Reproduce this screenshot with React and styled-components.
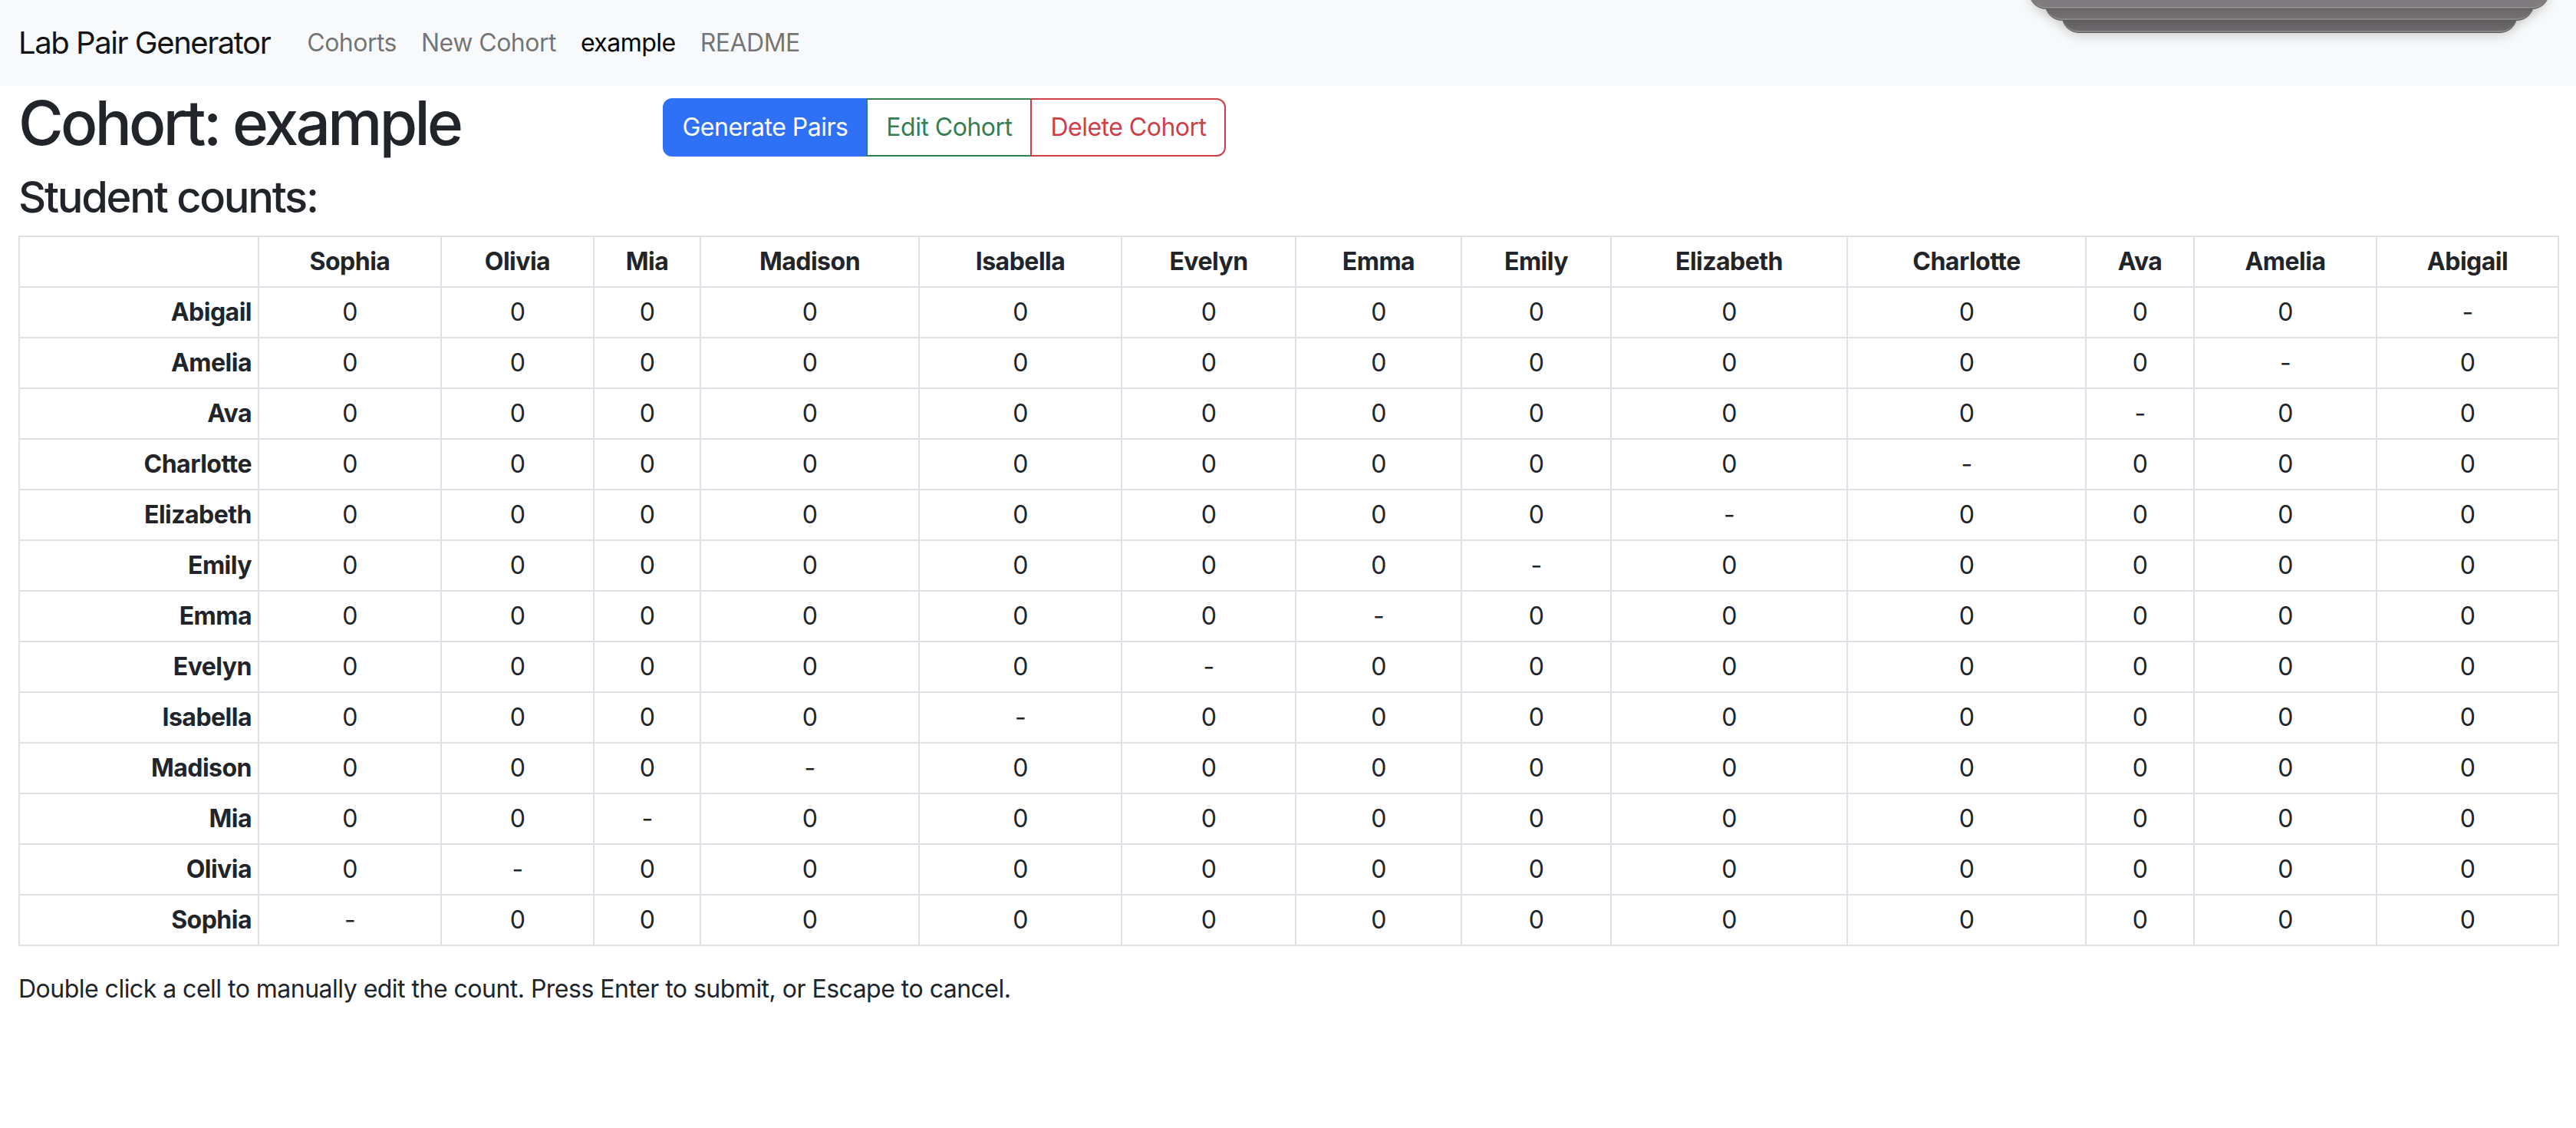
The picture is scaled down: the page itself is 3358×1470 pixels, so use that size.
import React from 'react';
import styled, { createGlobalStyle } from 'styled-components';

const students = [
  'Abigail',
  'Amelia',
  'Ava',
  'Charlotte',
  'Elizabeth',
  'Emily',
  'Emma',
  'Evelyn',
  'Isabella',
  'Madison',
  'Mia',
  'Olivia',
  'Sophia',
];

const columns = [...students].reverse();

// widths of the table columns, first one is the row-name column
const colWidths = [312, 238, 199, 139, 285, 264, 227, 216, 195, 308, 311, 141, 238, 237];

const navLinks = [
  { label: 'Cohorts' },
  { label: 'New Cohort' },
  { label: 'example', active: true },
  { label: 'README' },
];

export default function App() {
  return (
    <>
      <GlobalStyle />
      <Navbar>
        <Brand href="#">Lab Pair Generator</Brand>
        <NavList>
          {navLinks.map((link) => (
            <NavLink key={link.label} href="#" $active={link.active}>
              {link.label}
            </NavLink>
          ))}
        </NavList>
        <Island>
          <IslandLayer $left={43} $right={42} $bottom={42} $color="#6e6b6e" />
          <IslandLayer $left={21} $right={20} $bottom={26} $color="#777376" />
          <IslandLayer $left={0} $right={0} $bottom={11} $color="#7f7b7e" />
        </Island>
      </Navbar>

      <Main>
        <HeaderRow>
          <Title>Cohort: example</Title>
          <Actions>
            <ButtonGroup>
              <Button $variant="primary">Generate Pairs</Button>
              <Button $variant="success">Edit Cohort</Button>
              <Button $variant="danger">Delete Cohort</Button>
            </ButtonGroup>
          </Actions>
        </HeaderRow>

        <SubTitle>Student counts:</SubTitle>

        <Table>
          <colgroup>
            {colWidths.map((w, i) => (
              <col key={i} style={{ width: w }} />
            ))}
          </colgroup>
          <thead>
            <tr>
              <HeadCell />
              {columns.map((name) => (
                <HeadCell key={name}>{name}</HeadCell>
              ))}
            </tr>
          </thead>
          <tbody>
            {students.map((row) => (
              <tr key={row}>
                <RowHead>{row}</RowHead>
                {columns.map((col) => (
                  <Cell key={col}>{row === col ? '-' : 0}</Cell>
                ))}
              </tr>
            ))}
          </tbody>
        </Table>

        <Hint>
          Double click a cell to manually edit the count. Press Enter to submit, or Escape to cancel.
        </Hint>
      </Main>
    </>
  );
}

const GlobalStyle = createGlobalStyle`
  * {
    box-sizing: border-box;
  }
  body {
    margin: 0;
    background: #fff;
    color: #212529;
    font-family: Inter, Roboto, 'Noto Sans', sans-serif;
    font-size: 32px;
    line-height: 1.5;
    letter-spacing: -0.016em;
  }
`;

const Navbar = styled.nav`
  position: relative;
  display: flex;
  align-items: center;
  height: 112px;
  padding: 16px 24px;
  background: #f8f9fa;
`;

const Brand = styled.a`
  padding: 10px 0;
  margin-right: 32px;
  font-size: 40px;
  line-height: 60px;
  letter-spacing: -0.036em;
  color: #141414;
  text-decoration: none;
`;

const NavList = styled.div`
  display: flex;
`;

const NavLink = styled.a`
  padding: 16px;
  font-size: 32px;
  line-height: 48px;
  color: ${(p) => (p.$active ? '#000' : 'rgba(0, 0, 0, 0.55)')};
  text-decoration: none;
`;

const Island = styled.div`
  position: absolute;
  top: 0;
  left: 2645px;
  width: 678px;
  height: 42px;
`;

const IslandLayer = styled.div`
  position: absolute;
  top: -20px;
  left: ${(p) => p.$left}px;
  right: ${(p) => p.$right}px;
  height: ${(p) => p.$bottom + 20}px;
  background: ${(p) => p.$color};
  border-radius: 0 0 22px 22px;
  border-bottom: 2px solid #8d8a8c;
  box-shadow: 0 1px 0 #5b595b, 0 6px 14px rgba(0, 0, 0, 0.14);
`;

const Main = styled.main`
  padding: 0 24px;
`;

const HeaderRow = styled.div`
  display: grid;
  grid-template-columns: 1fr 3fr;
  margin: 0 -24px;

  & > * {
    padding: 0 24px;
  }
`;

const Title = styled.h1`
  margin: 0 0 16px;
  font-size: 80px;
  font-weight: 500;
  line-height: 1.2;
  letter-spacing: -0.046em;
  white-space: nowrap;
`;

const Actions = styled.div`
  margin-top: 16px;
`;

const ButtonGroup = styled.div`
  display: inline-flex;

  & > button:first-child {
    border-radius: 12px 0 0 12px;
  }
  & > button:last-child {
    border-radius: 0 12px 12px 0;
  }
  & > button + button {
    margin-left: -2px;
  }
`;

const variants = {
  primary: { bg: '#2e71f6', color: '#fff', border: '#2e71f6' },
  success: { bg: '#fff', color: '#357e52', border: '#357e52' },
  danger: { bg: '#fff', color: '#cf3e47', border: '#cf3e47' },
};

const Button = styled.button`
  height: 76px;
  padding: 12px 24px;
  font-family: inherit;
  font-size: 32px;
  line-height: 48px;
  letter-spacing: inherit;
  border: 2px solid ${(p) => variants[p.$variant].border};
  border-radius: 0;
  background: ${(p) => variants[p.$variant].bg};
  color: ${(p) => variants[p.$variant].color};
  cursor: pointer;
`;

const SubTitle = styled.h3`
  margin: 0 0 16px;
  font-size: 56px;
  font-weight: 500;
  line-height: 1.2;
  letter-spacing: -0.04em;
`;

const Table = styled.table`
  width: 100%;
  table-layout: fixed;
  border-collapse: collapse;
  margin-bottom: 32px;
  font-size: 32px;
  line-height: 48px;
  color: #212529;
`;

const HeadCell = styled.th`
  padding: 8px;
  border: 2px solid #dee2e6;
  font-weight: 700;
  text-align: center;
`;

const RowHead = styled.th`
  padding: 8px;
  border: 2px solid #dee2e6;
  font-weight: 700;
  text-align: right;
`;

const Cell = styled.td`
  padding: 8px;
  border: 2px solid #dee2e6;
  text-align: center;
`;

const Hint = styled.p`
  margin: 0 0 32px;
`;
